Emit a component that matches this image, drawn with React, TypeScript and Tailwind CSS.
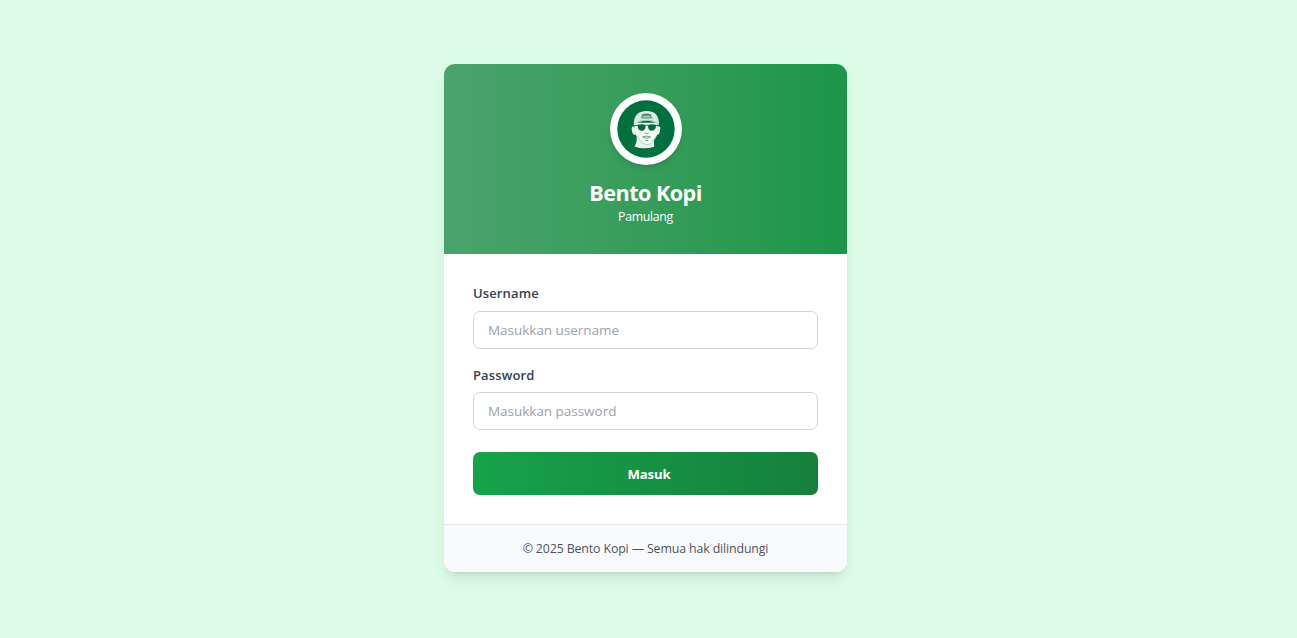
import React from "react";

function Logo() {
  return (
    <svg viewBox="0 0 58 58" className="size-[58px]" aria-hidden="true">
      <circle cx="29" cy="29" r="28.7" fill="#00703f" />
      <g transform="translate(-2.2 -1) scale(1.06 1.03)">
        <path d="M20.6 36 C20.8 41 20.5 43 18.6 46 Q27 49.6 37.2 46.3 L36.8 39Z" fill="#e6f2eb" />
        <path d="M18.6 26.5 C16 26 15.4 28 16.2 31 C16.8 34 18 35.4 20 34.6Z" fill="#e9f3ed" />
        <path d="M40.6 26.5 C43 26 43.4 28 42.6 31 C42 34 41 35.4 39 34.6Z" fill="#e9f3ed" />
        <path d="M18.4 23 H40.6 V31 C40 37.5 35.5 43.8 30.2 43.8 S20 37.5 19 31Z" fill="#f5faf7" />
        <path d="M18 25.6 C17.4 16.5 21.5 11.6 30 11.6 S42 16.5 41.6 25.6 C36.5 19.8 24 19.6 18 25.6Z" fill="#dcebe2" />
        <path d="M25 18 C25.2 12.9 34.6 12.9 35 18Z" fill="#4f9873" />
        <path d="M25.5 15.2 H34.4 M24.6 18.5 H35.5" stroke="#2b7f57" strokeWidth=".7" />
        <path d="M27 16.8 H33.3" stroke="#d6e8dd" strokeWidth=".8" />
        <path d="M18.8 24.2 C23 19.5 36.5 19.3 40.8 24" stroke="#8bbaa0" strokeWidth=".6" fill="none" />
        <path d="M17.5 26.3 L22.5 25.3 M38.5 25.3 L42 26.1 M28 25.8 Q30.2 24.7 32.4 25.8" stroke="#10653f" strokeWidth=".9" fill="none" />
        <path d="M21.7 25.1 C24 24.2 27.4 24.4 28.8 25.3 C29.4 29 27.8 31 25.4 30.9 C22.6 30.8 21.2 28.4 21.7 25.1Z M31.5 25.3 C33 24.3 37 24.2 38.8 25.1 C39.1 28.6 37.7 30.8 35 30.9 C32.3 31 31 28.7 31.5 25.3Z" fill="#076943" />
        <path d="M28 33 Q30 34.4 32 33 M26 36.8 Q30 35.4 33.8 36.8 M26.4 37 Q30 39.3 33.5 37 M28.6 40.3 H31.5" stroke="#43906a" strokeWidth=".75" fill="none" />
        <path d="M21.3 35.5 C23 40 26.5 44.2 30.2 44.2 S36 41 38.2 36.8" stroke="#8fbfa4" strokeWidth=".6" fill="none" />
      </g>
    </svg>
  );
}

type FieldProps = { id: string; label: string; placeholder: string; type: string };

function Field({ id, label, placeholder, type }: FieldProps) {
  return (
    <div>
      <label htmlFor={id} className="mb-[8.5px] block text-[13px] leading-[18px] font-semibold tracking-[0.01em] text-[#374151]">
        {label}
      </label>
      <input
        id={id}
        type={type}
        placeholder={placeholder}
        className="block h-[38px] w-full rounded-[7px] border border-[#d1d5db] bg-white px-[14px] text-[13.5px] tracking-[-0.002em] text-[#374151] outline-none placeholder:text-[#9ca3af]"
      />
    </div>
  );
}

export default function App() {
  return (
    <main className="flex h-screen items-start justify-center bg-[#dcfce7] pt-16 pr-[6px] font-['Open_Sans','Noto_Sans',sans-serif]">
      <section className="w-[403px] overflow-hidden rounded-[11px] bg-white shadow-[0_9px_14px_-3px_rgba(0,0,0,0.1),0_4px_5px_-4px_rgba(0,0,0,0.1)]">
        <header className="flex h-[190px] flex-col items-center bg-linear-to-r from-[#4aa36c] to-[#1b9648] pt-[29px] text-white">
          <div className="flex size-[72px] items-center justify-center rounded-full bg-white shadow-md">
            <Logo />
          </div>
          <h1 className="mt-[14px] text-[21.6px] leading-7 font-bold tracking-[-0.025em]">Bento Kopi</h1>
          <p className="mt-px text-[12.3px] leading-[18px] tracking-[-0.025em]">Pamulang</p>
        </header>
        <form className="px-[29px] pt-[30.4px] pb-[28.6px]" onSubmit={(e) => e.preventDefault()}>
          <div className="flex flex-col gap-[17px]">
            <Field id="username" label="Username" type="text" placeholder="Masukkan username" />
            <Field id="password" label="Password" type="password" placeholder="Masukkan password" />
          </div>
          <button className="mt-[22px] block h-[43px] w-full rounded-[7px] bg-linear-to-r from-[#16a34a] to-[#15803d] pt-[2px] pl-[7px] text-[13.2px] font-bold tracking-[-0.01em] text-white">
            Masuk
          </button>
        </form>
        <footer className="flex h-[48px] items-center justify-center border-t border-[#e5e7eb] bg-[#f9fafb] pt-[2px] text-[12.4px] tracking-[-0.012em] text-[#4b5563]">
          © 2025 Bento Kopi — Semua hak dilindungi
        </footer>
      </section>
    </main>
  );
}
